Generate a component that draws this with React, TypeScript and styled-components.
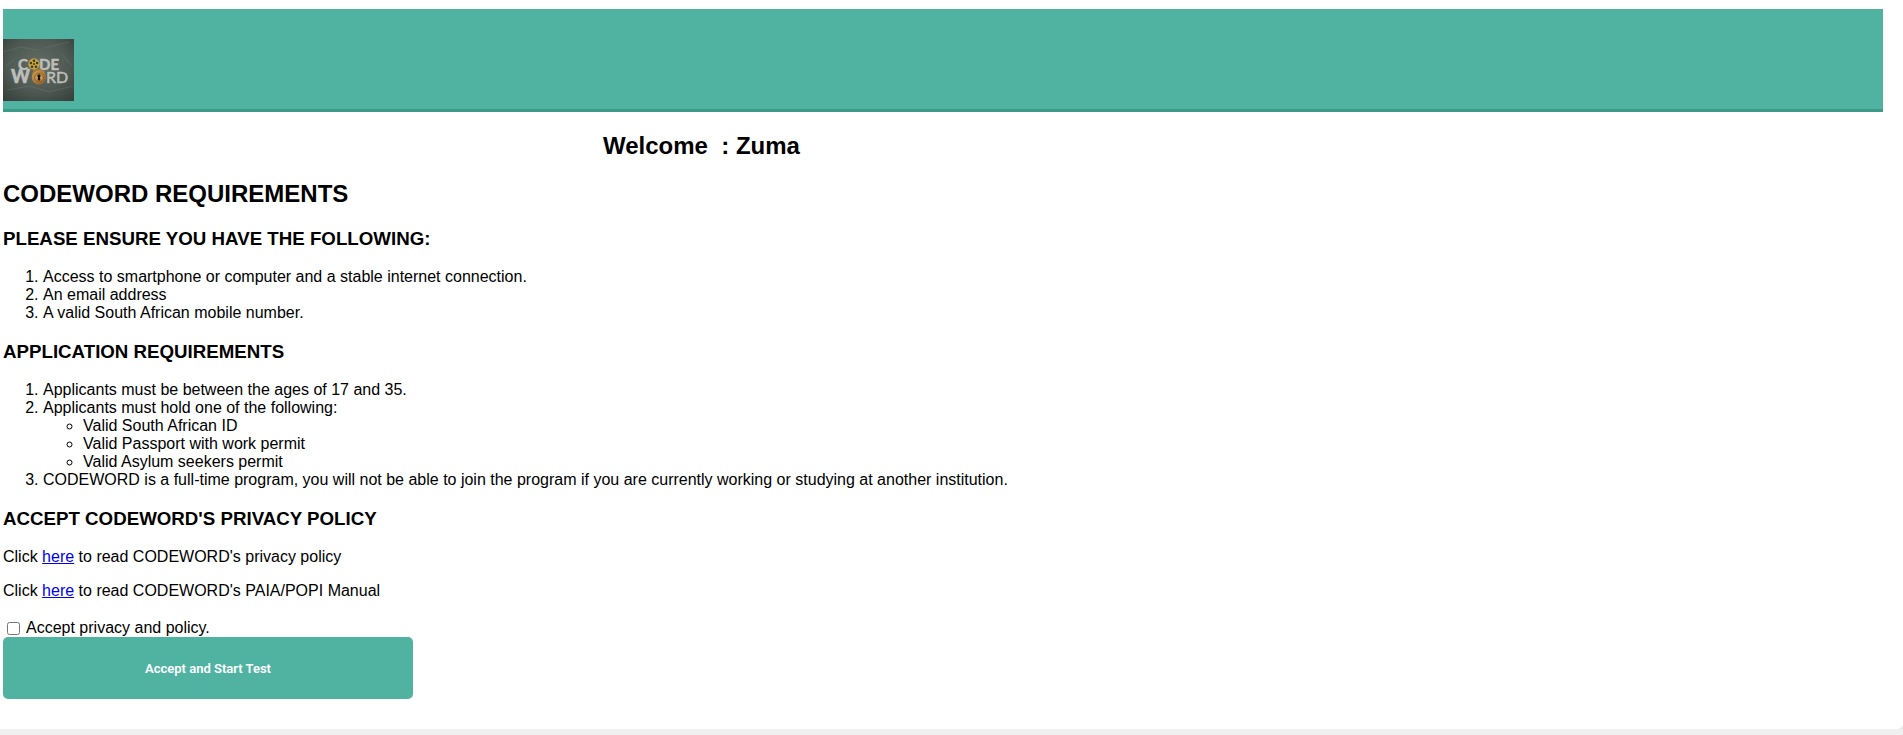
import React from "react";
import styled, { createGlobalStyle } from "styled-components";

const GlobalStyle = createGlobalStyle`
  body {
    margin: 0;
    background: #f0f0f0;
    color: #000;
    font-family: "Liberation Sans", Arial, Helvetica, sans-serif;
    font-size: 16px;
  }
`;

const Page = styled.div`
  padding: 9px 20px 30px 3px;
  background: #fff;
  border-radius: 0 0 5px 0;
  box-shadow: 0 1px 5px rgba(0, 0, 0, 0.12);
`;

const Header = styled.header`
  padding: 30px 0 8px;
  background: #50b3a2;
  border-bottom: 3px solid #3d9988;
`;

const LogoImage = styled.svg`
  display: block;
  width: 71px;
  height: 62px;
`;

const Title = styled.h2<{ $indent?: boolean }>`
  margin: 20px 0;
  padding-left: ${(p) => (p.$indent ? "600px" : "0")};
  font-size: 24px;
  line-height: 28px;
  white-space: pre-wrap;
`;

const SectionTitle = styled.h3`
  margin: 19px 0;
  line-height: 21px;
`;

const NumberedList = styled.ol`
  margin: 0;
  padding-left: 40px;
  line-height: 18px;
`;

const BulletList = styled.ul`
  margin: 0;
  padding-left: 40px;
`;

const Paragraph = styled.p`
  margin: 16px 0;
  line-height: 18px;
`;

const PolicyLink = styled.a`
  color: #0000ee;
  text-decoration: underline;
`;

const Consent = styled.div`
  display: flex;
  align-items: center;
  gap: 6px;
  padding: 3px 0 0 4px;
  line-height: 18px;
`;

const Checkbox = styled.input`
  width: 13px;
  height: 13px;
  margin: 0;
`;

const StartButton = styled.button`
  display: block;
  width: 410px;
  max-width: 100%;
  height: 62px;
  padding: 0;
  border: 0;
  border-radius: 5px;
  background: #50b3a2;
  color: #fff;
  font-family: Roboto, "Liberation Sans", Arial, sans-serif;
  font-size: 13px;
  font-weight: 600;
  cursor: pointer;
`;

function Logo() {
  return (
    <LogoImage viewBox="0 0 71 62" role="img" aria-label="Codeword">
      <defs>
        <radialGradient id="slate" cx="50%" cy="42%" r="72%">
          <stop offset="0" stopColor="#626c65" />
          <stop offset="0.6" stopColor="#4e5953" />
          <stop offset="1" stopColor="#38413c" />
        </radialGradient>
        <linearGradient id="brass" x1="0" y1="0" x2="1" y2="1">
          <stop offset="0" stopColor="#d0a050" />
          <stop offset="1" stopColor="#8c5722" />
        </linearGradient>
      </defs>
      <rect width="71" height="62" fill="url(#slate)" />
      <g fill="none" stroke="#7b857d" strokeOpacity="0.3">
        <path d="M0 13L18 8L33 11M42 9L66 3M4 51L27 47L46 53L70 47M3 27L12 20M58 14L69 27" />
        <path d="M60 19V25M63 21L66 23" strokeWidth="0.6" />
      </g>
      <g
        fontFamily="Lato, Liberation Sans, sans-serif"
        fontWeight="700"
        fill="#bdbeba"
        stroke="#bdbeba"
        strokeWidth="0.5"
      >
        <text x="15" y="31" fontSize="15">C</text>
        <text x="36" y="31" fontSize="15">DE</text>
        <text x="8" y="44" fontSize="18" fontWeight="900">W</text>
        <text x="43" y="44" fontSize="16" fontWeight="400">RD</text>
      </g>
      <circle cx="31" cy="25" r="5.7" fill="#c9a33d" />
      <g fill="#433b20">
        <circle cx="31" cy="25" r="1" />
        <circle cx="31" cy="21.7" r="1.3" />
        <circle cx="34.1" cy="24" r="1.3" />
        <circle cx="33" cy="27.7" r="1.3" />
        <circle cx="29" cy="27.7" r="1.3" />
        <circle cx="27.9" cy="24" r="1.3" />
      </g>
      <path d="M30 36L31 32L37 30.5L41 33V36" fill="none" stroke="#a87635" strokeWidth="2" />
      <circle cx="36" cy="38.5" r="7.2" fill="url(#brass)" />
      <circle cx="36" cy="38.5" r="4.3" fill="#c49855" stroke="#7c4e20" strokeWidth="0.7" />
      <path d="M34.3 37a1.7 1.7 0 1 1 3.4 0l-.8 1.2.5 3.2h-2.8l.5-3.2z" fill="#17140e" />
    </LogoImage>
  );
}

export default function App() {
  return (
    <>
      <GlobalStyle />
      <Page>
        <Header>
          <Logo />
        </Header>
        <main>
          <Title $indent>{"Welcome\u00a0 : Zuma"}</Title>
          <Title>CODEWORD REQUIREMENTS</Title>

          <SectionTitle>PLEASE ENSURE YOU HAVE THE FOLLOWING:</SectionTitle>
          <NumberedList>
            <li>Access to smartphone or computer and a stable internet connection.</li>
            <li>An email address</li>
            <li>A valid South African mobile number.</li>
          </NumberedList>

          <SectionTitle>APPLICATION REQUIREMENTS</SectionTitle>
          <NumberedList>
            <li>Applicants must be between the ages of 17 and 35.</li>
            <li>
              Applicants must hold one of the following:
              <BulletList>
                <li>Valid South African ID</li>
                <li>Valid Passport with work permit</li>
                <li>Valid Asylum seekers permit</li>
              </BulletList>
            </li>
            <li>
              CODEWORD is a full-time program, you will not be able to join the program if you are
              currently working or studying at another institution.
            </li>
          </NumberedList>

          <SectionTitle>ACCEPT CODEWORD'S PRIVACY POLICY</SectionTitle>
          <Paragraph>
            Click <PolicyLink href="#privacy">here</PolicyLink> to read CODEWORD's privacy policy
          </Paragraph>
          <Paragraph>
            Click <PolicyLink href="#manual">here</PolicyLink> to read CODEWORD's PAIA/POPI Manual
          </Paragraph>

          <Consent>
            <Checkbox type="checkbox" id="accept" />
            <label htmlFor="accept">Accept privacy and policy.</label>
          </Consent>
          <StartButton type="button">Accept and Start Test</StartButton>
        </main>
      </Page>
    </>
  );
}
